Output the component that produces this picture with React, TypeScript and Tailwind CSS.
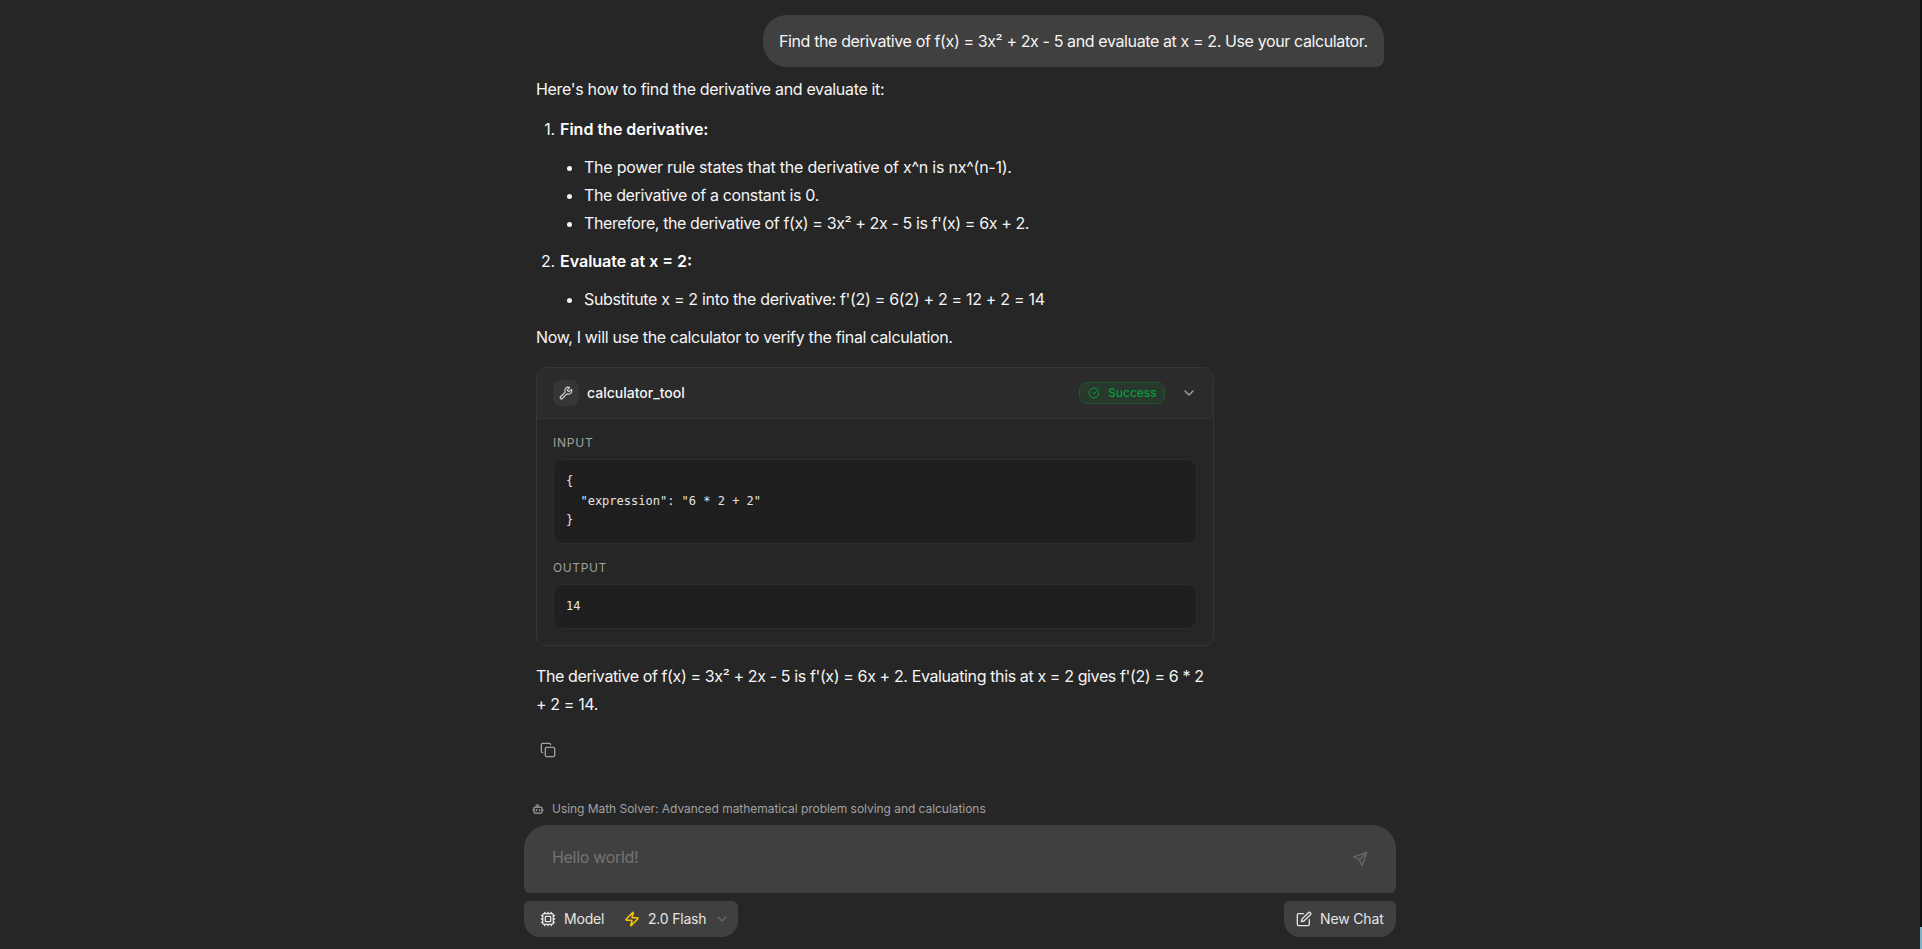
import type { ReactNode } from "react";
import { Bot, ChevronDown, CircleCheckBig, Copy, Cpu, Wrench, Zap } from "lucide-react";
import { FiSend, FiEdit } from "react-icons/fi";

function Item({ n, title, children }: { n: number; title: string; children: ReactNode }) {
  return (
    <div className="mb-[10px]">
      <div className="flex h-7 items-center">
        <span className="mr-[5px] w-[19px] text-right tracking-[-0.2px]">{n}.</span>
        <strong className="font-semibold text-white">{title}</strong>
      </div>
      <ul className="mt-[10px] list-disc pl-12">{children}</ul>
    </div>
  );
}

export default function App() {
  return (
    <div className="flex h-[949px] w-[1922px] overflow-hidden bg-[#262626] font-['Inter',sans-serif] text-base leading-7 text-neutral-100">
      <div className="flex w-[1920px]">
        <main className="mx-auto flex w-[872px] flex-col pt-[15px]">
          <section className="flex h-[777px] flex-col px-3">
            <div className="flex h-[52px] w-[621px] shrink-0 items-center self-end whitespace-nowrap rounded-3xl rounded-br-lg bg-[#404040] px-4 tracking-[-0.385px]">Find the derivative of f(x) = 3x² + 2x - 5 and evaluate at x = 2. Use your calculator.</div>
            <article className="w-[678px] pt-2">
              <p className="mb-3 tracking-[-0.33px]">Here's how to find the derivative and evaluate it:</p>
              <Item n={1} title="Find the derivative:">
                <li className="tracking-[-0.23px]">The power rule states that the derivative of x^n is nx^(n-1).</li>
                <li className="tracking-[-0.36px]">The derivative of a constant is 0.</li>
                <li className="tracking-[-0.39px]">Therefore, the derivative of f(x) = 3x² + 2x - 5 is f'(x) = 6x + 2.</li>
              </Item>
              <Item n={2} title="Evaluate at x = 2:">
                <li className="tracking-[-0.31px]">Substitute x = 2 into the derivative: f'(2) = 6(2) + 2 = 12 + 2 = 14</li>
              </Item>
              <p className="tracking-[-0.335px]">Now, I will use the calculator to verify the final calculation.</p>
              <div className="mt-4 overflow-hidden rounded-[10px] border border-[#363636]">
                <div className="flex h-[51px] items-center border-b border-[#303030] bg-[#2b2b2b] px-4">
                  <span className="flex size-[26px] items-center justify-center rounded-lg bg-[#363636] text-neutral-300"><Wrench size={14} /></span>
                  <span className="ml-2 flex-1 text-sm font-medium">calculator_tool</span>
                  <span className="mr-4 flex h-[22px] w-[86px] items-center rounded-lg border border-[#22552f] bg-[#29382c] pl-2 text-xs font-medium text-[#079b3c]"><CircleCheckBig size={12} /><span className="ml-2">Success</span></span>
                  <ChevronDown size={16} className="text-neutral-400" />
                </div>
                <div className="px-4 pt-4 pb-4">
                  <p className="text-xs leading-4 tracking-[0.8px] text-neutral-400">INPUT</p>
                  <pre className="mt-2 h-[85px] rounded-[10px] border border-[#2d2d2d] bg-[#1f1f1f] px-3 py-3 font-['DejaVu_Sans_Mono',monospace] text-xs leading-[19.5px] text-neutral-200">{'{\n  "expression": "6 * 2 + 2"\n}'}</pre>
                  <p className="mt-4 text-xs leading-4 tracking-[0.6px] text-neutral-400">OUTPUT</p>
                  <pre className="mt-2 h-[45px] rounded-[10px] border border-[#2d2d2d] bg-[#1f1f1f] px-3 py-3 font-['DejaVu_Sans_Mono',monospace] text-xs leading-[19.5px] text-neutral-200">14</pre>
                </div>
              </div>
              <p className="mt-4 whitespace-nowrap tracking-[-0.38px]">The derivative of f(x) = 3x² + 2x - 5 is f'(x) = 6x + 2. Evaluating this at x = 2 gives f'(2) = 6 * 2<br />+ 2 = 14.</p>
              <Copy size={16} className="mt-6 ml-1 text-neutral-400" />
            </article>
          </section>
          <div className="flex h-[33px] items-center gap-2 pl-2 text-xs tracking-[-0.045px] text-neutral-400"><Bot size={12} strokeWidth={2.5} /><span>Using Math Solver: Advanced mathematical problem solving and calculations</span></div>
          <div className="flex h-[68px] items-center justify-between rounded-t-3xl rounded-b-md bg-[#404040] px-7 text-[#737373]"><span className="mb-1 tracking-[-0.3px]">Hello world!</span><FiSend size={16} className="text-[#666]" /></div>
          <div className="mt-2 flex h-9 justify-between text-sm text-neutral-200">
            <div className="flex w-[214px] items-center rounded-t-md rounded-b-2xl bg-[#404040] pl-4"><Cpu size={16} /><span className="ml-2 w-10 tracking-[-0.2px]">Model</span><Zap size={16} strokeWidth={2.3} className="ml-5 text-[#fdc700]" /><span className="ml-2 tracking-[-0.2px]">2.0 Flash</span><ChevronDown size={16} className="ml-2 text-[#666]" /></div>
            <button className="flex w-28 items-center gap-2 rounded-t-md rounded-b-2xl bg-[#404040] pl-3 tracking-[-0.15px]"><FiEdit size={16} />New Chat</button>
          </div>
        </main>
      </div>
      <div className="flex w-0.5 flex-col bg-[#101010]"><div className="mt-[927px] flex-1 bg-[#7fb2c7]" /></div>
    </div>
  );
}
